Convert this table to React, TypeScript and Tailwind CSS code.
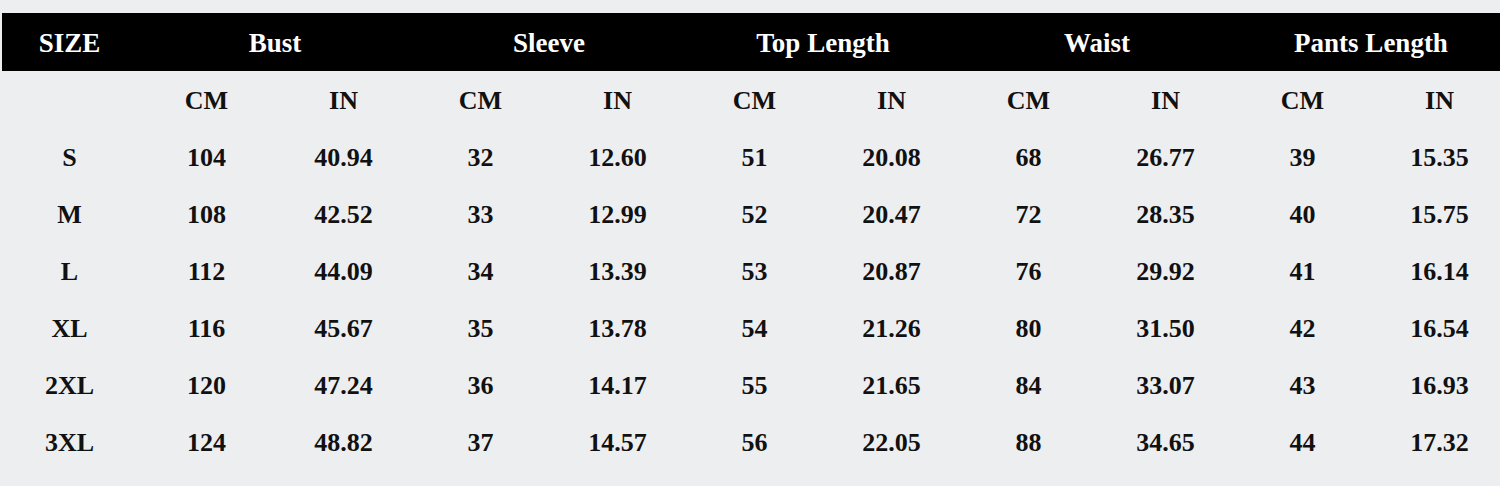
const groups = ["Bust", "Sleeve", "Top Length", "Waist", "Pants Length"]

const rows = [
  ["S", "104", "40.94", "32", "12.60", "51", "20.08", "68", "26.77", "39", "15.35"],
  ["M", "108", "42.52", "33", "12.99", "52", "20.47", "72", "28.35", "40", "15.75"],
  ["L", "112", "44.09", "34", "13.39", "53", "20.87", "76", "29.92", "41", "16.14"],
  ["XL", "116", "45.67", "35", "13.78", "54", "21.26", "80", "31.50", "42", "16.54"],
  ["2XL", "120", "47.24", "36", "14.17", "55", "21.65", "84", "33.07", "43", "16.93"],
  ["3XL", "124", "48.82", "37", "14.57", "56", "22.05", "88", "34.65", "44", "17.32"],
]

export default function App() {
  return (
    <div
      className="w-[1500px] h-[486px] overflow-hidden bg-[#edeef0] pt-[13px] font-bold text-[#111]"
      style={{ fontFamily: '"Liberation Serif", "Times New Roman", serif' }}
    >
      {/* header bar */}
      <div className="ml-[2px] h-[58px] bg-black">
        <div className="-ml-[1px] grid grid-cols-[repeat(11,137px)] h-full items-center pt-[3px] text-white text-[27px] leading-none">
          <div className="text-center">SIZE</div>
          {groups.map((g) => (
            <div key={g} className="col-span-2 text-center">
              {g}
            </div>
          ))}
        </div>
      </div>

      <div className="ml-[1px] grid grid-cols-[repeat(11,137px)] text-[26px] leading-none">
        <div className="h-[57px]" />
        {groups.map((g) => (
          <div key={g} className="contents">
            <div className="h-[57px] flex items-center justify-center pt-[2px]">CM</div>
            <div className="h-[57px] flex items-center justify-center pt-[2px]">IN</div>
          </div>
        ))}
        {rows.map((r) =>
          r.map((v, i) => (
            <div key={r[0] + i} className="h-[57px] flex items-center justify-center pt-[2px]">
              {v}
            </div>
          ))
        )}
      </div>
    </div>
  )
}
